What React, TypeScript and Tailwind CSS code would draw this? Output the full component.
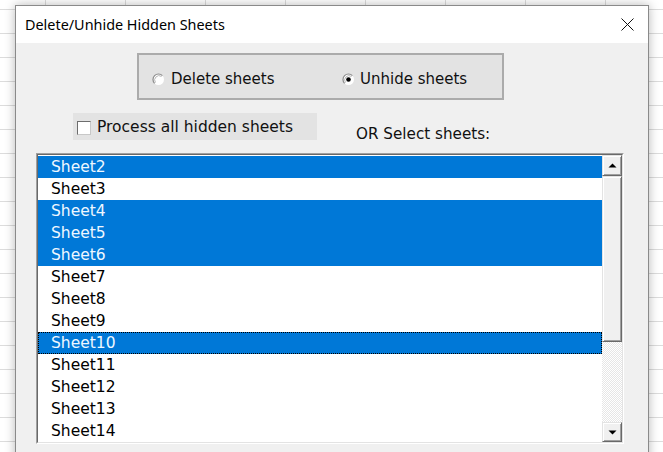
import { type FC } from 'react';

// Dialog from an Excel add-in: pick hidden sheets to delete or unhide.

type SheetRow = { name: string; selected: boolean; focused?: boolean };

const ROWS: SheetRow[] = [
  { name: 'Sheet2', selected: true },
  { name: 'Sheet3', selected: false },
  { name: 'Sheet4', selected: true },
  { name: 'Sheet5', selected: true },
  { name: 'Sheet6', selected: true },
  { name: 'Sheet7', selected: false },
  { name: 'Sheet8', selected: false },
  { name: 'Sheet9', selected: false },
  { name: 'Sheet10', selected: true, focused: true },
  { name: 'Sheet11', selected: false },
  { name: 'Sheet12', selected: false },
  { name: 'Sheet13', selected: false },
  { name: 'Sheet14', selected: false },
];

const Radio: FC<{ checked?: boolean }> = ({ checked = false }) => (
  <svg width="13" height="13" viewBox="0 0 13 13" className="shrink-0">
    <circle cx="6.5" cy="6.5" r="5.5" fill="#ffffff" />
    <path d="M2.6 10.4 A5.5 5.5 0 0 1 10.4 2.6" fill="none" stroke="#8a8a8a" strokeWidth="1.2" />
    <path d="M3.5 9.5 A4.3 4.3 0 0 1 9.5 3.5" fill="none" stroke="#b8b8b8" strokeWidth="1" />
    {checked ? <circle cx="6.5" cy="6.5" r="2.3" fill="#000000" /> : null}
  </svg>
);

const ArrowUp: FC = () => (
  <svg width="9" height="5" viewBox="0 0 9 5">
    <polygon points="0.5,4.5 4.5,0.5 8.5,4.5" fill="#000000" />
  </svg>
);

const ArrowDown: FC = () => (
  <svg width="9" height="5" viewBox="0 0 9 5">
    <polygon points="0.5,0.5 8.5,0.5 4.5,4.5" fill="#000000" />
  </svg>
);

const ScrollButton: FC<{ dir: 'up' | 'down'; h: string }> = ({ dir, h }) => (
  <div
    className={`${h} flex items-center justify-center bg-[#f0f0f0] border-t border-l border-[#e3e3e3] border-r border-b border-r-[#696969] border-b-[#696969] shadow-[inset_1px_1px_0_#ffffff,inset_-1px_-1px_0_#a0a0a0]`}
  >
    {dir === 'up' ? <ArrowUp /> : <ArrowDown />}
  </div>
);

export default function App() {
  return (
    <div className="w-[663px] h-[452px] overflow-hidden bg-white bg-[linear-gradient(to_right,#dcdcdc_1px,transparent_1px),linear-gradient(to_bottom,#dcdcdc_1px,transparent_1px)] bg-[length:80px_24px] bg-[position:45px_9px] pt-[5px] pl-[15px] font-['DejaVu_Sans',sans-serif]">
      <div className="w-[634px] h-[470px] border border-[#8a8a8a] bg-[#f0f0f0] shadow-[0_0_10px_rgba(0,0,0,0.28)] flex flex-col">
        {/* title bar */}
        <div className="h-[37px] shrink-0 bg-white flex items-center justify-between pl-[9px] pr-[14px]">
          <span className="text-[14.4px] text-black font-['Noto_Sans',sans-serif]">
            Delete/Unhide Hidden Sheets
          </span>
          <svg width="13" height="13" viewBox="0 0 13 13">
            <path d="M0.5 0.5 L12.5 12.5 M12.5 0.5 L0.5 12.5" stroke="#111111" strokeWidth="1" />
          </svg>
        </div>

        {/* body */}
        <div className="flex flex-col pt-[10px]">
          <div className="ml-[121px] w-[367px] h-[47px] border-2 border-[#ababab] bg-[#e3e3e3] flex items-center pl-[13px] pt-[5px] text-[15px] text-[#111111]">
            <div className="w-[190px] flex items-center gap-[6px]">
              <Radio />
              <span>Delete sheets</span>
            </div>
            <div className="flex items-center gap-[5px]">
              <Radio checked />
              <span>Unhide sheets</span>
            </div>
          </div>

          <div className="mt-[13px] h-[27px] flex items-start">
            <div className="ml-[57px] w-[244px] h-[27px] bg-[#e3e3e3] flex items-center pl-[4px] pt-[2px] gap-[6px] text-[15.5px] text-[#111111]">
              <span className="w-[14px] h-[14px] shrink-0 bg-white border border-[#6d6d6d] border-r-[#c8c8c8] border-b-[#c8c8c8]" />
              <span>Process all hidden sheets</span>
            </div>
            <div className="ml-[39px] mt-[12px] leading-[18px] text-[15.2px] text-[#111111]">
              OR Select sheets:
            </div>
          </div>

          {/* list box */}
          <div className="mt-[13px] ml-[20px] w-[588px] h-[291px] border-t border-l border-[#a0a0a0] border-r border-b border-r-white border-b-white">
            <div className="w-full h-full flex border-t border-l border-[#696969] border-r border-b border-r-[#e3e3e3] border-b-[#e3e3e3] bg-white">
              <div className="flex-1 pt-[1px] flex flex-col">
                {ROWS.map((row) => (
                  <div
                    key={row.name}
                    className={`h-[22px] shrink-0 leading-[22px] pl-[13px] text-[15.5px] ${
                      row.selected ? 'bg-[#0078d7] text-[#eef7ff]' : 'bg-white text-black'
                    } ${row.focused ? 'outline-1 outline-dotted outline-black -outline-offset-1' : ''}`}
                  >
                    {row.name}
                  </div>
                ))}
              </div>
              <div className="w-[20px] shrink-0 flex flex-col">
                <ScrollButton dir="up" h="h-[21px]" />
                <div className="h-[166px] shrink-0 bg-[#f0f0f0] border-t border-l border-[#e3e3e3] border-r border-b border-r-[#696969] border-b-[#696969] shadow-[inset_1px_1px_0_#ffffff,inset_-1px_-1px_0_#a0a0a0]" />
                <div className="flex-1 bg-[repeating-conic-gradient(#e6e6e6_0%_25%,#ffffff_0%_50%)] bg-[length:2px_2px]" />
                <ScrollButton dir="down" h="h-[20px]" />
              </div>
            </div>
          </div>
        </div>
      </div>
    </div>
  );
}
